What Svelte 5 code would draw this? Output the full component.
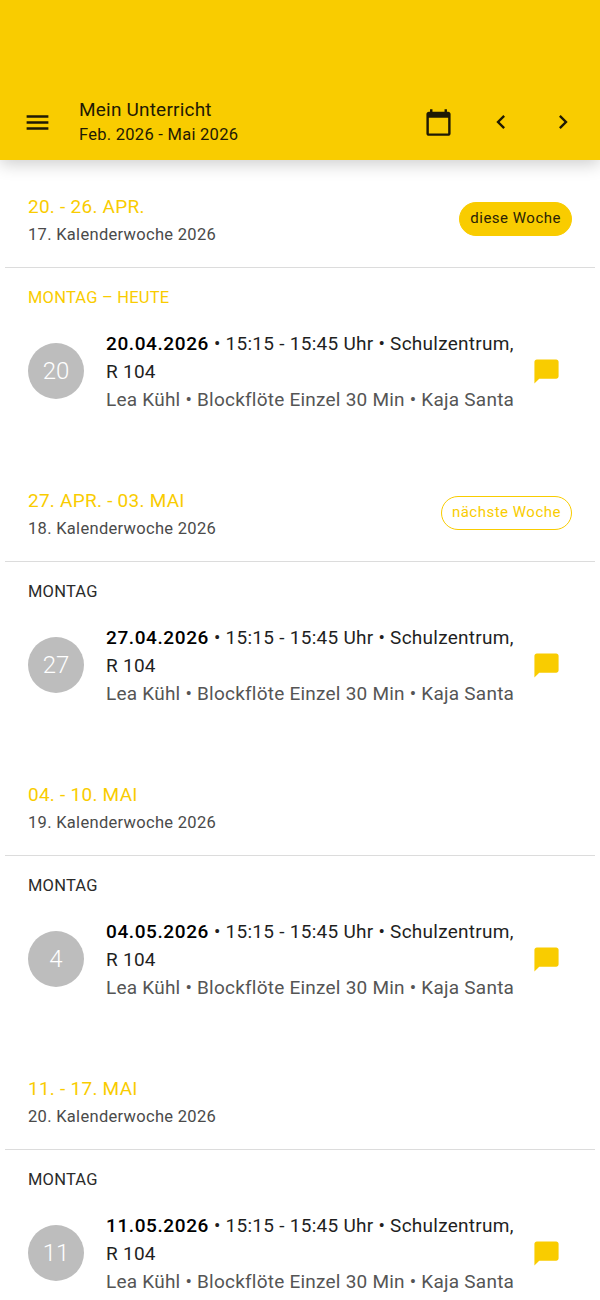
<script>
	const weeks = [
		{ range: '20. - 26. APR.', kw: '17. Kalenderwoche 2026', badge: 'diese Woche', badgeClass: 'solid', day: 'MONTAG – HEUTE', today: true, num: '20', date: '20.04.2026' },
		{ range: '27. APR. - 03. MAI', kw: '18. Kalenderwoche 2026', badge: 'nächste Woche', badgeClass: 'outline', day: 'MONTAG', today: false, num: '27', date: '27.04.2026' },
		{ range: '04. - 10. MAI', kw: '19. Kalenderwoche 2026', day: 'MONTAG', today: false, num: '4', date: '04.05.2026' },
		{ range: '11. - 17. MAI', kw: '20. Kalenderwoche 2026', day: 'MONTAG', today: false, num: '11', date: '11.05.2026' }
	];
</script>

<div class="page">
	<header class="toolbar">
		<button class="icon menu" aria-label="Menü">
			<svg width="29" height="29" viewBox="0 0 24 24"><path d="M3 18h18v-2H3v2zm0-5h18v-2H3v2zm0-7v2h18V6H3z" /></svg>
		</button>
		<div class="titles">
			<div class="title">Mein Unterricht</div>
			<div class="subtitle">Feb. 2026 - Mai 2026</div>
		</div>
		<div class="actions">
			<button class="icon" aria-label="Kalender">
				<svg width="29" height="29" viewBox="0 0 24 24"><path d="M20 3h-1V1h-2v2H7V1H5v2H4c-1.1 0-2 .9-2 2v16c0 1.1.9 2 2 2h16c1.1 0 2-.9 2-2V5c0-1.1-.9-2-2-2zm0 18H4V8h16v13z" /></svg>
			</button>
			<button class="icon" aria-label="Zurück">
				<svg width="28" height="28" viewBox="0 0 24 24"><path d="M15.41 7.41 14 6l-6 6 6 6 1.41-1.41L10.83 12z" /></svg>
			</button>
			<button class="icon" aria-label="Weiter">
				<svg width="28" height="28" viewBox="0 0 24 24"><path d="M10 6 8.59 7.41 13.17 12l-4.58 4.59L10 18l6-6z" /></svg>
			</button>
		</div>
	</header>

	<main>
		{#each weeks as w}
			<section class="week">
				<div class="week-head">
					<div>
						<div class="range">{w.range}</div>
						<div class="kw">{w.kw}</div>
					</div>
					{#if w.badge}
						<span class="badge {w.badgeClass}">{w.badge}</span>
					{/if}
				</div>
				<div class="day" class:today={w.today}>{w.day}</div>
				<div class="item">
					<div class="avatar">{w.num}</div>
					<div class="text">
						<div class="line"><span class="date">{w.date}</span> • 15:15 - 15:45 Uhr • Schulzentrum, R 104</div>
						<div class="line muted">Lea Kühl • Blockflöte Einzel 30 Min • Kaja Santa</div>
					</div>
					<svg class="note" width="29" height="29" viewBox="0 0 24 24"><path d="M20 2H4c-1.1 0-1.99.9-1.99 2L2 22l4-4h14c1.1 0 2-.9 2-2V4c0-1.100-.9-2-2-2z" /></svg>
				</div>
			</section>
		{/each}
	</main>
</div>

<style>
	:global(body) {
		background: #fff;
		font-family: Roboto, sans-serif;
	}

	.page {
		height: 1300px;
		overflow: hidden;
	}

	.toolbar {
		height: 160px;
		box-sizing: border-box;
		padding: 84px 23px 0 22.5px;
		background: #f9cc00;
		box-shadow: 0 4px 16px rgba(0, 0, 0, 0.2);
		display: flex;
		align-items: center;
		position: relative;
		color: #1f1a04;
	}

	.icon {
		border: 0;
		background: none;
		padding: 0;
		display: flex;
		align-items: center;
		justify-content: center;
		color: inherit;
	}

	.icon svg {
		fill: currentColor;
	}

	.titles {
		margin-left: 27.5px;
		flex: 1;
	}

	.title {
		font-size: 19px;
		line-height: 24px;
		letter-spacing: 0.2px;
	}

	.subtitle {
		font-size: 16.5px;
		line-height: 25px;
		letter-spacing: 0.27px;
	}

	.actions {
		display: flex;
		align-items: center;
		gap: 34px;
	}

	.week {
		height: 294px;
	}

	.week-head {
		margin: 0 5px;
		height: 108px;
		padding: 34px 23px 0;
		box-sizing: border-box;
		border-bottom: 1px solid #dcdcdc;
		display: flex;
		justify-content: space-between;
		align-items: flex-start;
	}

	.range {
		font-size: 19px;
		line-height: 26px;
		color: #f9cc00;
		letter-spacing: 0.25px;
	}

	.kw {
		font-size: 16.5px;
		line-height: 24px;
		margin-top: 3px;
		color: #4a4a4a;
		letter-spacing: 0.3px;
	}

	.badge {
		margin-top: 8px;
		height: 34px;
		box-sizing: border-box;
		border-radius: 17px;
		padding: 0 10px;
		font-size: 15px;
		line-height: 30px;
		letter-spacing: 0.5px;
		border: 1px solid #f9cc00;
	}

	.badge.solid {
		background: #f9cc00;
		color: #2a2306;
	}

	.badge.outline {
		color: #f9cc00;
	}

	.day {
		margin: 18px 28px 0;
		font-size: 16.5px;
		line-height: 24px;
		letter-spacing: 0.2px;
		color: #2b2b2b;
	}

	.day.today {
		color: #f9cc00;
	}

	.item {
		display: flex;
		align-items: center;
		padding: 18px 0 0 28px;
	}

	.avatar {
		width: 56px;
		height: 56px;
		flex: none;
		border-radius: 50%;
		background: #bdbdbd;
		color: #fff;
		font-size: 24px;
		font-weight: 300;
		display: flex;
		align-items: center;
		justify-content: center;
	}

	.text {
		margin-left: 22px;
		padding-top: 2px;
		width: 412px;
		font-size: 19px;
		line-height: 28px;
		letter-spacing: 0.27px;
		color: #1f1f1f;
	}

	.date {
		color: #000;
		font-weight: 500;
		letter-spacing: 0.6px;
	}

	.muted {
		color: #555;
		white-space: nowrap;
		letter-spacing: 0.23px;
	}

	.note {
		flex: none;
		margin-left: 14px;
		fill: #f9cc00;
	}
</style>
